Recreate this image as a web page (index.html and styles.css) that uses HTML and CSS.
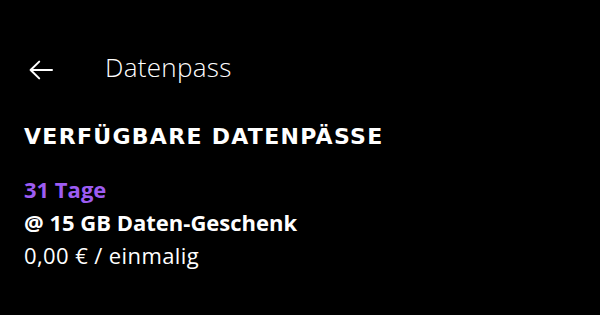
FILE: index.html
```html
<!DOCTYPE html>
<html lang="de">
<head>
<meta charset="utf-8">
<title>Datenpass</title>
<link rel="stylesheet" href="styles.css">
</head>
<body>
<div class="screen">
  <header class="topbar">
    <svg class="back" width="24" height="20" viewBox="0 0 24 20" aria-hidden="true">
      <path d="M23 10H1.6M10.2 1.6L1.6 10l8.6 8.4" fill="none" stroke="#fff" stroke-width="2" stroke-linecap="round" stroke-linejoin="round"/>
    </svg>
    <h1 class="title">Datenpass</h1>
  </header>
  <main class="content">
    <h2 class="section">VERFÜGBARE DATENPÄSSE</h2>
    <div class="pass">
      <div class="duration">31 Tage</div>
      <div class="name">@ 15 GB Daten-Geschenk</div>
      <div class="price">0,00 € / einmalig</div>
    </div>
  </main>
</div>
</body>
</html>
```
FILE: styles.css
```css
html, body {
  margin: 0;
  padding: 0;
  background: #000;
}
.screen {
  width: 600px;
  height: 315px;
  background: #000;
  color: #fff;
  font-family: "Open Sans", sans-serif;
  overflow: hidden;
}
.topbar {
  display: flex;
  align-items: flex-start;
  padding: 51px 0 0 29px;
  height: 32px;
}
.back {
  display: block;
  flex: none;
  margin-top: 9px;
}
.title {
  margin: 0 0 0 52px;
  font-size: 26px;
  font-weight: 300;
  line-height: 32px;
  letter-spacing: 0.3px;
}
.content {
  padding: 0 24px;
}
.section {
  margin: 40px 0 0;
  font-family: "DejaVu Sans", sans-serif;
  font-size: 22px;
  font-weight: 700;
  letter-spacing: 1.3px;
  line-height: 28px;
}
.pass {
  margin-top: 22px;
  display: flex;
  flex-direction: column;
}
.duration,
.name,
.price {
  font-size: 22px;
  line-height: 33px;
}
.duration {
  color: #9d5cf2;
  font-weight: 700;
}
.name {
  font-weight: 700;
}
.price {
  font-weight: 400;
  letter-spacing: 0.4px;
}
```
